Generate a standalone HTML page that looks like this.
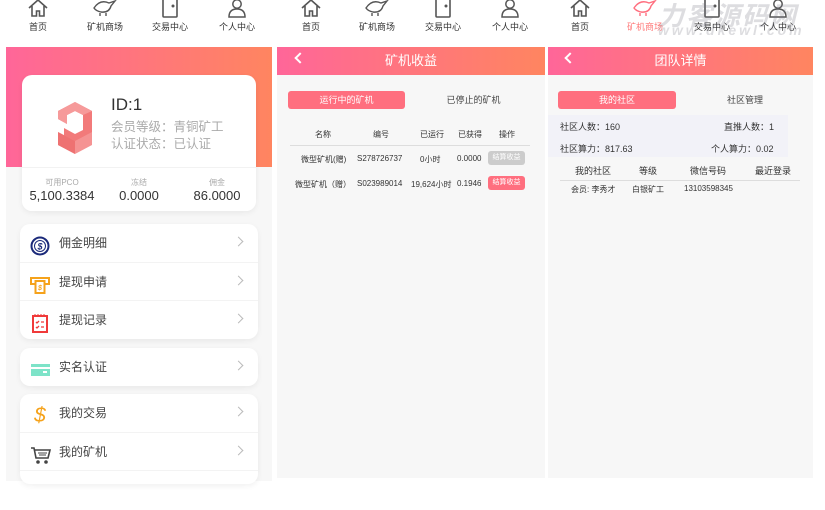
<!DOCTYPE html>
<html><head><meta charset="utf-8"><style>
*{margin:0;padding:0;box-sizing:border-box}
body{width:825px;height:481px;background:#fff;position:relative;overflow:hidden;font-family:"Liberation Sans","Noto Sans CJK SC",sans-serif;color:#333}
.a{position:absolute}
.nav{position:absolute;top:0;height:40px;font-size:9px;color:#333}
.ni{position:absolute;top:-2px;width:60px;margin-left:-30px;text-align:center}
.ni svg{display:block;margin:0 auto}
.ni span{display:block;margin-top:2px}
.grad{background:linear-gradient(90deg,#ff6699,#ff8560)}
.hd{color:#fff;font-size:13px;text-align:center;line-height:28px}
.card{background:#fff;border-radius:10px;box-shadow:0 2px 6px rgba(0,0,0,.06)}
.row{height:38.5px;border-bottom:1px solid #f3f3f3;position:relative;font-size:12px;color:#444;line-height:38px;padding-left:39px}
.row:last-child{border-bottom:none}
.row i{position:absolute;left:10px;top:9px;width:20px;height:20px}
.row b{position:absolute;right:16px;top:14px;width:7px;height:7px;border-right:1.5px solid #bbb;border-top:1.5px solid #bbb;transform:rotate(45deg)}
.tab{position:absolute;top:91px;height:18px;border-radius:3px;font-size:9px;line-height:18px;text-align:center}
.th{position:absolute;font-size:8px;color:#333}
.back{position:absolute;top:54px;width:8px;height:8px;border-left:2.5px solid #fff;border-bottom:2.5px solid #fff;transform:rotate(45deg)}
</style></head><body>

<!-- nav bars -->
<div class="nav" style="left:0;width:275px">
 <div class="ni" style="left:38px"><svg width="22" height="20" viewBox="0 0 22 20"><path d="M2 10 11 2 20 10M5 8V18h4.5v-5h3v5H17V8" fill="none" stroke="#555" stroke-width="1.6"/></svg><span>首页</span></div>
 <div class="ni" style="left:105px"><svg width="28" height="20" viewBox="0 0 28 20"><path d="M3 10Q9 1 18 5L24 3L20 8Q18 15 10 14Q5 13 3 10ZM9 15v3M15 15v3" fill="none" stroke="#555" stroke-width="1.4"/></svg><span>矿机商场</span></div>
 <div class="ni" style="left:170px"><svg width="22" height="20" viewBox="0 0 22 20"><rect x="4" y="1" width="14" height="18" rx="1" fill="none" stroke="#555" stroke-width="1.6"/><circle cx="14" cy="8" r="1.5" fill="#555"/></svg><span>交易中心</span></div>
 <div class="ni" style="left:237px"><svg width="22" height="20" viewBox="0 0 22 20"><circle cx="11" cy="6" r="4.2" fill="none" stroke="#555" stroke-width="1.5"/><path d="M3 19Q3 11 11 11T19 19Z" fill="none" stroke="#555" stroke-width="1.5"/></svg><span>个人中心</span></div>
</div>
<div class="nav" style="left:275px;width:275px">
 <div class="ni" style="left:36px"><svg width="22" height="20" viewBox="0 0 22 20"><path d="M2 10 11 2 20 10M5 8V18h4.5v-5h3v5H17V8" fill="none" stroke="#555" stroke-width="1.6"/></svg><span>首页</span></div>
 <div class="ni" style="left:102px"><svg width="28" height="20" viewBox="0 0 28 20"><path d="M3 10Q9 1 18 5L24 3L20 8Q18 15 10 14Q5 13 3 10ZM9 15v3M15 15v3" fill="none" stroke="#555" stroke-width="1.4"/></svg><span>矿机商场</span></div>
 <div class="ni" style="left:168px"><svg width="22" height="20" viewBox="0 0 22 20"><rect x="4" y="1" width="14" height="18" rx="1" fill="none" stroke="#555" stroke-width="1.6"/><circle cx="14" cy="8" r="1.5" fill="#555"/></svg><span>交易中心</span></div>
 <div class="ni" style="left:235px"><svg width="22" height="20" viewBox="0 0 22 20"><circle cx="11" cy="6" r="4.2" fill="none" stroke="#555" stroke-width="1.5"/><path d="M3 19Q3 11 11 11T19 19Z" fill="none" stroke="#555" stroke-width="1.5"/></svg><span>个人中心</span></div>
</div>
<div class="nav" style="left:548px;width:277px">
 <div class="ni" style="left:32px"><svg width="22" height="20" viewBox="0 0 22 20"><path d="M2 10 11 2 20 10M5 8V18h4.5v-5h3v5H17V8" fill="none" stroke="#555" stroke-width="1.6"/></svg><span>首页</span></div>
 <div class="ni" style="left:97px;color:#ff7a7a"><svg width="28" height="20" viewBox="0 0 28 20"><path d="M3 10Q9 1 18 5L24 3L20 8Q18 15 10 14Q5 13 3 10ZM9 15v3M15 15v3" fill="none" stroke="#ff6f7f" stroke-width="1.4"/></svg><span>矿机商场</span></div>
 <div class="ni" style="left:164px"><svg width="22" height="20" viewBox="0 0 22 20"><rect x="4" y="1" width="14" height="18" rx="1" fill="none" stroke="#555" stroke-width="1.6"/><circle cx="14" cy="8" r="1.5" fill="#555"/></svg><span>交易中心</span></div>
 <div class="ni" style="left:230px"><svg width="22" height="20" viewBox="0 0 22 20"><circle cx="11" cy="6" r="4.2" fill="none" stroke="#555" stroke-width="1.5"/><path d="M3 19Q3 11 11 11T19 19Z" fill="none" stroke="#555" stroke-width="1.5"/></svg><span>个人中心</span></div>
 <div class="a" style="left:110px;top:-4px;font-size:26px;font-style:italic;font-weight:bold;color:rgba(120,120,130,.25);letter-spacing:2px">力客源码网</div>
 <div class="a" style="left:110px;top:22px;font-size:14px;font-style:italic;font-weight:bold;color:rgba(120,120,130,.25);letter-spacing:3px">www.dkewl.com</div>
</div>

<!-- panel 1 -->
<div class="a" style="left:6px;top:47px;width:266px;height:434px;background:#f7f7f7"></div>
<div class="a grad" style="left:6px;top:47px;width:266px;height:120px"></div>
<div class="a card" style="left:22px;top:75px;width:234px;height:136px;overflow:hidden">
 <div class="a" style="left:0;top:92px;width:234px;height:44px;background:#fff;border-top:1px solid #f2f2f2"></div>
 <svg class="a" style="left:33px;top:24px" width="40" height="56" viewBox="0 0 40 56"><path d="M3 12 20 3 37 12V38L20 47 9 41V29L20 35 28 31V16L20 12 12 16V25L3 20Z" fill="#f27a7a"/><path d="M3 20 12 25V16L20 12 28 16 37 12 20 3 3 12Z" fill="#f69a9a"/><path d="M3 33 20 42 37 33V46L20 55 3 46Z" fill="#f59393"/><path d="M3 33 20 42V55L3 46Z" fill="#ee7272"/></svg>
 <div class="a" style="left:89px;top:20px;font-size:17px;color:#333">ID:1</div>
 <div class="a" style="left:89px;top:44px;font-size:12.5px;color:#aaa;line-height:17px">会员等级：青铜矿工<br>认证状态：已认证</div>
 <div class="a" style="left:0;top:102px;width:80px;text-align:center;font-size:8px;color:#aaa">可用PCO</div>
 <div class="a" style="left:0;top:113px;width:80px;text-align:center;font-size:13px;color:#333">5,100.3384</div>
 <div class="a" style="left:78px;top:102px;width:78px;text-align:center;font-size:8px;color:#aaa">冻结</div>
 <div class="a" style="left:78px;top:113px;width:78px;text-align:center;font-size:13px;color:#333">0.0000</div>
 <div class="a" style="left:156px;top:102px;width:78px;text-align:center;font-size:8px;color:#aaa">佣金</div>
 <div class="a" style="left:156px;top:113px;width:78px;text-align:center;font-size:13px;color:#333">86.0000</div>
</div>
<div class="a card" style="left:20px;top:224px;width:238px;height:115px">
 <div class="row"><i><svg width="20" height="20"><circle cx="10" cy="10" r="8.5" fill="none" stroke="#1b2a7a" stroke-width="2"/><circle cx="10" cy="10" r="5.5" fill="none" stroke="#1b2a7a" stroke-width="1"/><text x="10" y="13.5" font-size="9" text-anchor="middle" fill="#1b2a7a" font-weight="bold">$</text></svg></i>佣金明细<b></b></div>
 <div class="row"><i><svg width="20" height="20"><rect x="1" y="3" width="18" height="6" fill="none" stroke="#f5a21b" stroke-width="2"/><rect x="5.5" y="6" width="9" height="12" fill="#fff" stroke="#f5a21b" stroke-width="2"/><text x="10" y="15" font-size="7" text-anchor="middle" fill="#f5a21b" font-weight="bold">$</text></svg></i>提现申请<b></b></div>
 <div class="row"><i><svg width="20" height="20"><rect x="3" y="3" width="14" height="16" fill="none" stroke="#f03a3a" stroke-width="2"/><path d="M5 1v3M8 1v3M11 1v3M14 1v3" stroke="#f03a3a" stroke-width="1"/><path d="M6 9l1 1 2-2M11 9h3M6 14l1 1 2-2M11 14h3" stroke="#f03a3a" stroke-width="1.3" fill="none"/></svg></i>提现记录<b></b></div>
</div>
<div class="a card" style="left:20px;top:348px;width:238px;height:38px">
 <div class="row"><i><svg width="20" height="20"><rect x="1" y="4" width="19" height="12" fill="#7de3c8"/><rect x="1" y="7" width="19" height="2" fill="#fff"/><rect x="13" y="11" width="4" height="2" fill="#fff"/></svg></i>实名认证<b></b></div>
</div>
<div class="a card" style="left:20px;top:394px;width:238px;height:90px">
 <div class="row"><i><svg width="20" height="22"><text x="10" y="18" font-size="21" text-anchor="middle" fill="#f5a21b">$</text></svg></i>我的交易<b></b></div>
 <div class="row"><i><svg width="22" height="20"><path d="M1 3h3l2 10h12l2-8H5" fill="none" stroke="#444" stroke-width="1.6"/><path d="M8 8h9M9 10h7" stroke="#444" stroke-width="1"/><circle cx="8" cy="17" r="1.8" fill="#444"/><circle cx="16" cy="17" r="1.8" fill="#444"/></svg></i>我的矿机<b></b></div>
 <div class="row"></div>
</div>

<!-- panel 2 -->
<div class="a" style="left:277px;top:47px;width:268px;height:431px;background:#f7f7f7"></div>
<div class="a grad hd" style="left:277px;top:47px;width:268px;height:28px">矿机收益</div>
<div class="back" style="left:296px"></div>
<div class="tab" style="left:288px;width:117px;background:#ff6f7f;color:#fff">运行中的矿机</div>
<div class="tab" style="left:415px;width:117px;color:#444">已停止的矿机</div>
<div class="th" style="left:315px;top:129px">名称</div>
<div class="th" style="left:373px;top:129px">编号</div>
<div class="th" style="left:420px;top:129px">已运行</div>
<div class="th" style="left:458px;top:129px">已获得</div>
<div class="th" style="left:499px;top:129px">操作</div>
<div class="a" style="left:290px;top:145px;width:240px;height:1px;background:#ddd"></div>
<div class="th" style="left:301px;top:154px">微型矿机(赠)</div>
<div class="th" style="left:357px;top:154px">S278726737</div>
<div class="th" style="left:420px;top:154px">0小时</div>
<div class="th" style="left:457px;top:154px">0.0000</div>
<div class="a" style="left:488px;top:151px;width:37px;height:14px;border-radius:3px;background:#ccc;color:#fff;font-size:7px;text-align:center;line-height:14px">结算收益</div>
<div class="th" style="left:295px;top:179px">微型矿机（赠）</div>
<div class="th" style="left:357px;top:179px">S023989014</div>
<div class="th" style="left:411px;top:179px">19,624小时</div>
<div class="th" style="left:457px;top:179px">0.1946</div>
<div class="a" style="left:488px;top:176px;width:37px;height:14px;border-radius:3px;background:#ff6f7f;color:#fff;font-size:7px;text-align:center;line-height:14px">结算收益</div>

<!-- panel 3 -->
<div class="a" style="left:548px;top:47px;width:265px;height:431px;background:#f7f7f7"></div>
<div class="a grad hd" style="left:548px;top:47px;width:265px;height:28px">团队详情</div>
<div class="back" style="left:566px"></div>
<div class="tab" style="left:558px;width:118px;background:#ff6f7f;color:#fff">我的社区</div>
<div class="tab" style="left:686px;width:118px;color:#444">社区管理</div>
<div class="a" style="left:548px;top:115px;width:240px;height:42px;background:#f2f2f8"></div>
<div class="th" style="left:560px;top:120px;font-size:9px">社区人数：160</div>
<div class="th" style="left:724px;top:120px;font-size:9px">直推人数：1</div>
<div class="th" style="left:560px;top:142px;font-size:9px">社区算力：817.63</div>
<div class="th" style="left:711px;top:142px;font-size:9px">个人算力：0.02</div>
<div class="th" style="left:575px;top:164px;font-size:9px">我的社区</div>
<div class="th" style="left:639px;top:164px;font-size:9px">等级</div>
<div class="th" style="left:690px;top:164px;font-size:9px">微信号码</div>
<div class="th" style="left:755px;top:164px;font-size:9px">最近登录</div>
<div class="a" style="left:560px;top:180px;width:240px;height:1px;background:#ddd"></div>
<div class="th" style="left:571px;top:184px">会员: 李秀才</div>
<div class="th" style="left:632px;top:184px">白银矿工</div>
<div class="th" style="left:684px;top:184px">13103598345</div>
</body></html>
